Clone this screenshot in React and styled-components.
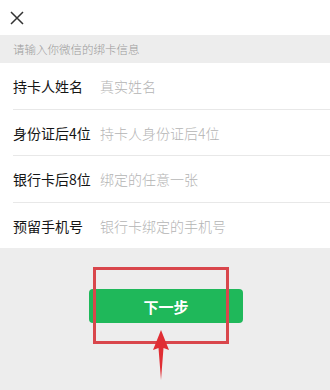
import React from "react";
import styled, { createGlobalStyle } from "styled-components";

const Global = createGlobalStyle`
  html, body { margin: 0; padding: 0; }
  body {
    background: #ededed;
    font-family: "Noto Sans CJK SC", "Noto Sans", sans-serif;
  }
`;

const Page = styled.div`
  position: relative;
  width: 330px;
  height: 390px;
  background: #ededed;
  overflow: hidden;
`;

const Header = styled.div`
  height: 35px;
  background: #fff;
  display: flex;
  align-items: center;
  padding-left: 10px;
`;

const Tip = styled.div`
  height: 28px;
  display: flex;
  align-items: center;
  padding-left: 13px;
  font-size: 11.5px;
  font-weight: 300;
  color: #9a9a9a;
`;

const Form = styled.div`
  background: #fff;
  padding-left: 13px;
`;

const Row = styled.div`
  height: ${(p) => p.$h}px;
  display: flex;
  align-items: center;
  border-bottom: ${(p) => (p.$last ? "none" : "1px solid #e8e8e8")};
  box-sizing: border-box;
`;

const Label = styled.div`
  width: 87px;
  font-size: 14px;
  font-weight: 400;
  color: #151515;
  white-space: nowrap;
`;

const Placeholder = styled.div`
  font-size: 14px;
  font-weight: 300;
  color: #b4b4b4;
  white-space: nowrap;
`;

const ButtonWrap = styled.div`
  display: flex;
  justify-content: center;
  padding-top: 41px;
  padding-left: 2px;
`;

const Button = styled.div`
  width: 154px;
  height: 34px;
  border-radius: 4px;
  background: #1fb85a;
  color: #fff;
  font-size: 15px;
  font-weight: 700;
  display: flex;
  align-items: center;
  justify-content: center;
`;

const RedBox = styled.div`
  position: absolute;
  left: 93px;
  top: 267px;
  width: 136px;
  height: 77px;
  border: 3px solid #d9464c;
  box-sizing: border-box;
`;

const Arrow = styled.svg`
  position: absolute;
  left: 150px;
  top: 328px;
`;

const rows = [
  ["持卡人姓名", "真实姓名", 47],
  ["身份证后4位", "持卡人身份证后4位", 46],
  ["银行卡后8位", "绑定的任意一张", 47],
  ["预留手机号", "银行卡绑定的手机号", 45],
];

export default function App() {
  return (
    <Page>
      <Global />
      <Header>
        <svg width="14" height="14" viewBox="0 0 14 14">
          <path d="M1 1 L13 13 M13 1 L1 13" stroke="#333" strokeWidth="1.5" fill="none" />
        </svg>
      </Header>
      <Tip>请输入你微信的绑卡信息</Tip>
      <Form>
        {rows.map(([l, p, h], i) => (
          <Row key={l} $h={h} $last={i === rows.length - 1}>
            <Label>{l}</Label>
            <Placeholder>{p}</Placeholder>
          </Row>
        ))}
      </Form>
      <ButtonWrap>
        <Button>下一步</Button>
      </ButtonWrap>
      <RedBox />
      <Arrow width="22" height="56" viewBox="0 0 22 56">
        <path d="M11 2 L19 22 L13.5 20 L11 52 L8.5 20 L3 22 Z" fill="#e02e34" />
      </Arrow>
    </Page>
  );
}
